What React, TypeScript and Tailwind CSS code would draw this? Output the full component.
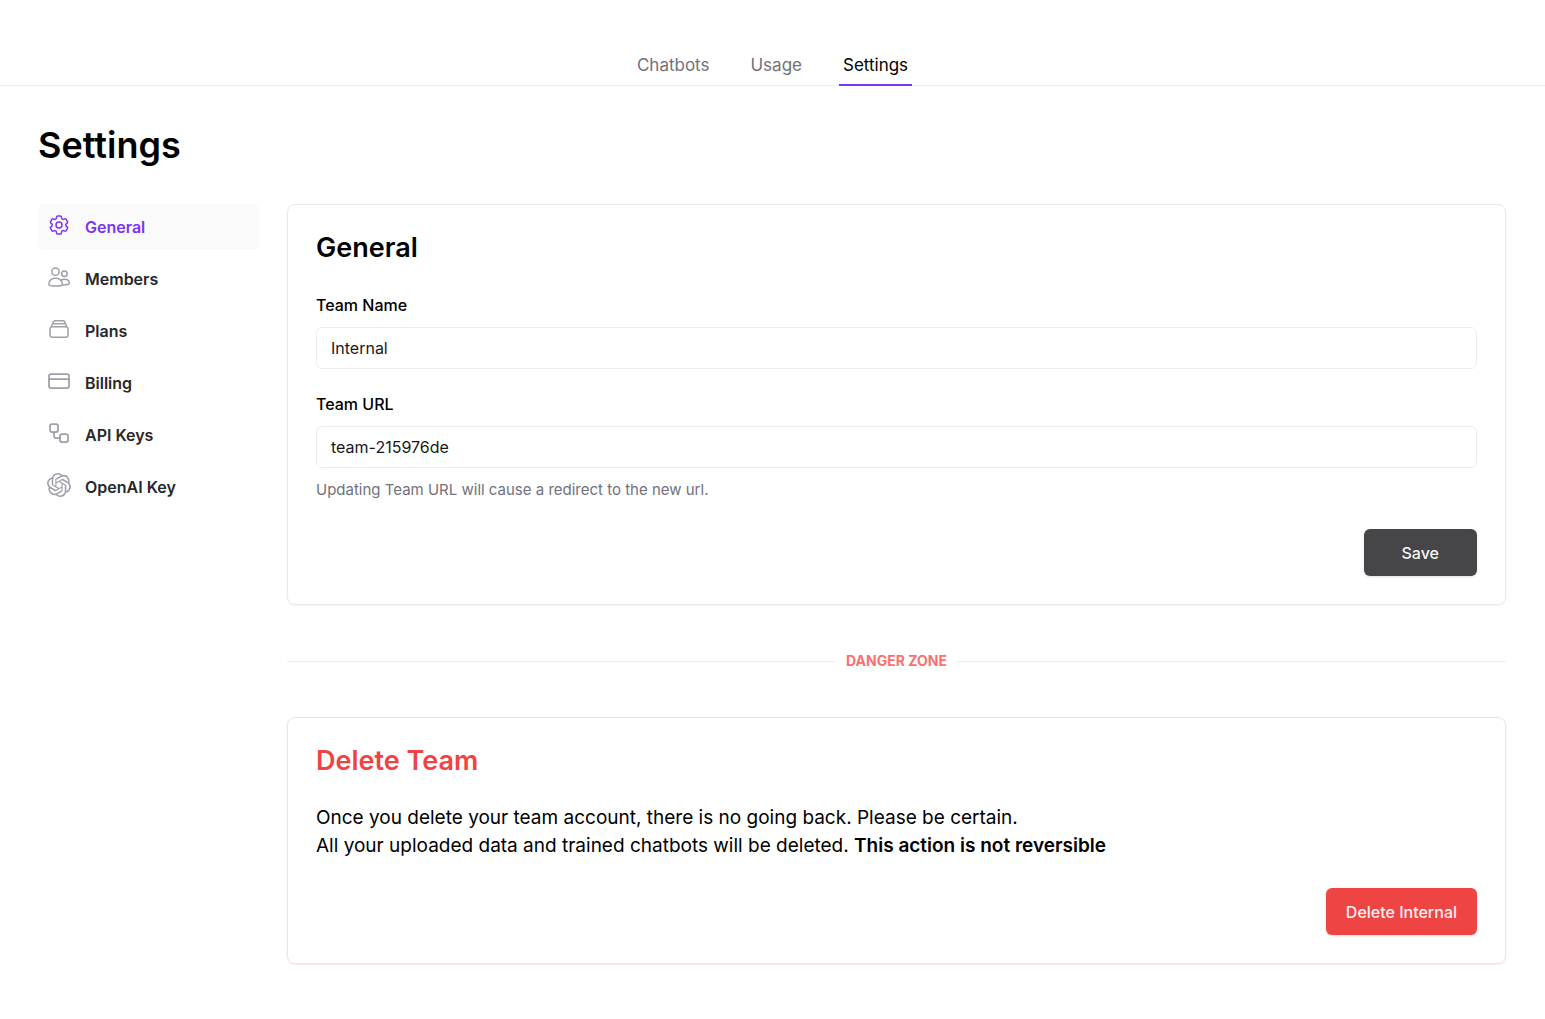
import type { ReactNode } from "react";
import { HiOutlineCog6Tooth, HiOutlineRectangleStack } from "react-icons/hi2";
import { SiOpenai } from "react-icons/si";
import { CreditCard, Workflow } from "lucide-react";

function MembersIcon() {
  return (
    <svg viewBox="0 0 24 24" className="size-6" fill="none" stroke="currentColor" strokeWidth="1.5" strokeLinecap="round" strokeLinejoin="round" aria-hidden="true">
      <circle cx="8.5" cy="6.7" r="3.6" />
      <circle cx="17.4" cy="8.7" r="2.8" />
      <path d="M1.8 19.2c0-3.700 3-6 6.800-6s6.800 2.300 6.800 6c0 1.200-2.600 1.900-6.800 1.900s-6.800-.7-6.800-1.900Z" />
      <path d="M14 15.200c1-.6 2.100-.9 3.400-.9 2.900 0 4.900 1.700 4.900 4 0 1-2.300 1.700-6.500 1.600" />
    </svg>
  );
}

const tabs = [
  { label: "Chatbots", active: false },
  { label: "Usage", active: false },
  { label: "Settings", active: true },
];

const sections: { label: string; icon: ReactNode; active?: boolean }[] = [
  { label: "General", icon: <HiOutlineCog6Tooth className="size-6" />, active: true },
  { label: "Members", icon: <MembersIcon /> },
  { label: "Plans", icon: <HiOutlineRectangleStack className="size-6" /> },
  { label: "Billing", icon: <CreditCard className="size-6" strokeWidth={1.75} /> },
  { label: "API Keys", icon: <Workflow className="size-6" strokeWidth={1.75} /> },
  { label: "OpenAI Key", icon: <SiOpenai className="size-6" /> },
];

function Field({ id, label, value, hint }: { id: string; label: string; value: string; hint?: string }) {
  return (
    <div>
      <label htmlFor={id} className="block text-base leading-5 font-medium">
        {label}
      </label>
      <input
        id={id}
        defaultValue={value}
        className="mt-3 block h-[42px] w-full rounded-md border border-zinc-200/70 px-3.5 text-base text-zinc-900 outline-none"
      />
      {hint && <p className="mt-3 text-[15px] leading-5 text-zinc-500">{hint}</p>}
    </div>
  );
}

export default function App() {
  return (
    <div className="min-h-screen bg-white font-['Inter',sans-serif] text-black">
      <nav className="flex justify-center gap-[33px] border-b border-zinc-200/70 pt-11">
        {tabs.map((tab) => (
          <a
            key={tab.label}
            href="#"
            className={
              tab.active
                ? "-mb-px border-b-2 border-[#7c35f0] px-1 pt-[9px] pb-[7px] text-[17px] leading-6"
                : "-mb-px border-b-2 border-transparent px-1 pt-[9px] pb-[7px] text-[17px] leading-6 text-zinc-500"
            }
          >
            {tab.label}
          </a>
        ))}
      </nav>

      <main className="pt-9 pr-[39px] pl-[38px]">
        <h1 className="text-4xl leading-[46px] font-semibold">Settings</h1>

        <div className="mt-9 flex items-start gap-7">
          <nav className="flex w-[221px] shrink-0 flex-col gap-1.5">
            {sections.map((s) => (
              <a
                key={s.label}
                href="#"
                className={
                  s.active
                    ? "flex h-[46px] items-center gap-3.5 rounded-md bg-zinc-50 px-[9px] text-base font-semibold text-[#7c35f0]"
                    : "flex h-[46px] items-center gap-3.5 rounded-md px-[9px] text-base font-semibold text-zinc-800"
                }
              >
                <span className={s.active ? "pb-1" : "pb-1 text-zinc-400"}>{s.icon}</span>
                {s.label}
              </a>
            ))}
          </nav>

          <div className="min-w-0 flex-1">
            <section className="rounded-lg border border-[#e9e9eb] px-7 pt-6 pb-7 shadow-xs">
              <h2 className="text-[27px] leading-[38px] font-semibold">General</h2>
              <form>
                <div className="mt-7 flex flex-col gap-[25px]">
                  <Field id="team-name" label="Team Name" value="Internal" />
                  <Field id="team-url" label="Team URL" value="team-215976de" hint="Updating Team URL will cause a redirect to the new url." />
                </div>
                <div className="mt-[29px] flex justify-end">
                  <button type="button" className="h-[47px] rounded-md bg-[#464648] px-[38px] text-base font-medium text-zinc-100 shadow-sm">
                    Save
                  </button>
                </div>
              </form>
            </section>

            <div className="my-[46px] flex items-center gap-2.5">
              <hr className="flex-1 border-zinc-200/70" />
              <span className="text-sm font-bold text-[#f87171]">DANGER ZONE</span>
              <hr className="flex-1 border-zinc-200/70" />
            </div>

            <section className="rounded-lg border border-[#fddcdc] px-7 pt-6 pb-7 shadow-xs shadow-red-500/10">
              <h2 className="text-[27px] leading-[38px] font-semibold text-[#ef4444]">Delete Team</h2>
              <p className="mt-6 text-[19px] leading-7">
                Once you delete your team account, there is no going back. Please be certain.
                <br />
                All your uploaded data and trained chatbots will be deleted. <strong className="font-semibold">This action is not reversible</strong>
              </p>
              <div className="mt-7 flex justify-end">
                <button type="button" className="h-[47px] rounded-md bg-[#ef4444] px-5 text-base font-medium text-red-50 shadow-sm">
                  Delete Internal
                </button>
              </div>
            </section>
          </div>
        </div>
      </main>
    </div>
  );
}
